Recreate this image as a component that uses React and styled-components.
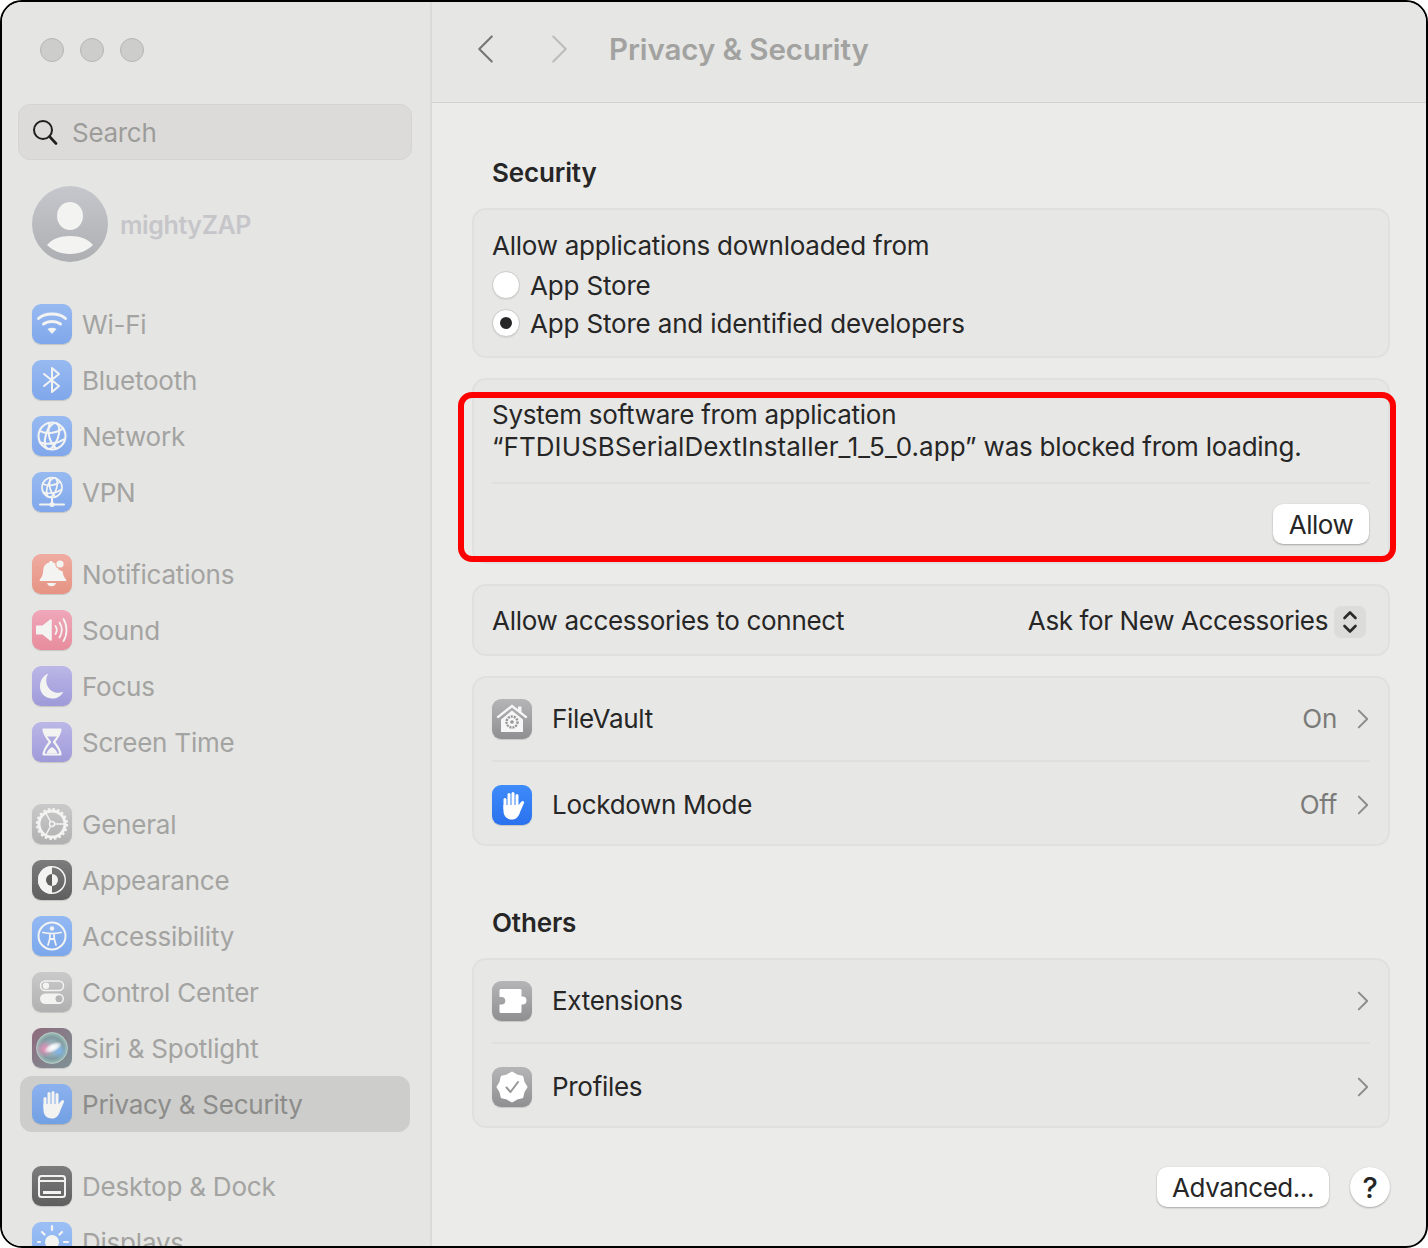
import React from "react";
import styled, { createGlobalStyle } from "styled-components";

const GlobalStyle = createGlobalStyle`
  html, body {
    margin: 0;
    background: #fff;
  }
  body {
    font-family: Inter, "Liberation Sans", sans-serif;
    -webkit-font-smoothing: antialiased;
  }
`;

const Window = styled.div`
  box-sizing: border-box;
  width: 1428px;
  height: 1248px;
  border: 2px solid #000;
  border-radius: 22px;
  overflow: hidden;
  display: grid;
  grid-template-columns: 430px 1fr;
  background: #ebebe9;
  color: #262626;
  letter-spacing: -0.25px;
`;

const Sidebar = styled.aside`
  height: 1244px;
  overflow: hidden;
  padding-top: 36px;
  box-sizing: border-box;
  background: #e5e5e3;
  border-right: 2px solid #dadad8;
`;

const Lights = styled.div`
  display: flex;
  gap: 16px;
  padding-left: 38px;
`;

const Light = styled.span`
  box-sizing: border-box;
  width: 24px;
  height: 24px;
  border-radius: 50%;
  background: #cdcdcb;
  border: 1px solid #b5b5b3;
`;

const SearchBox = styled.div`
  box-sizing: border-box;
  display: flex;
  align-items: center;
  gap: 14px;
  height: 56px;
  margin: 42px 18px 0 16px;
  padding-left: 13px;
  border: 1px solid #d4d4d2;
  border-radius: 12px;
  background: #dcdbd9;
  color: #9c9c9a;
  font-size: 26px;
  letter-spacing: -0.3px;
`;

const Profile = styled.div`
  display: flex;
  align-items: center;
  gap: 12px;
  height: 76px;
  margin-top: 26px;
  padding-left: 30px;
  color: #c6c6ca;
  font-size: 25px;
  font-weight: 600;
  letter-spacing: -0.4px;
`;

const ProfileName = styled.span`
  padding-top: 2px;
`;

const Nav = styled.nav`
  display: flex;
  flex-direction: column;
  gap: 26px;
  margin-top: 34px;
`;

const NavGroup = styled.div`
  display: flex;
  flex-direction: column;
`;

const NavRow = styled.div`
  flex: none;
  display: flex;
  align-items: center;
  gap: 10px;
  height: 56px;
  width: 390px;
  margin-left: 18px;
  padding-left: 12px;
  box-sizing: border-box;
  border-radius: 12px;
  font-size: 26px;
  letter-spacing: -0.22px;
  color: ${(p) => (p.$active ? "#8c8c8a" : "#a3a3a1")};
  background: ${(p) => (p.$active ? "#cdcdcb" : "transparent")};
`;

const Tile = styled.span`
  flex: none;
  width: 40px;
  height: 40px;
  border-radius: 9px;
  background: ${(p) => p.$bg};
  box-shadow: 0 1px 1px rgba(0, 0, 0, 0.14);
  overflow: hidden;
  svg {
    display: block;
    width: 40px;
    height: 40px;
  }
`;

const Main = styled.main`
  display: flex;
  flex-direction: column;
  height: 1244px;
  overflow: hidden;
`;

const Header = styled.header`
  flex: none;
  display: flex;
  align-items: center;
  box-sizing: border-box;
  height: 101px;
  padding: 0 0 6px 44px;
  background: #e6e6e4;
  border-bottom: 1px solid #d2d2d0;
`;

const HeaderButton = styled.span`
  display: flex;
  width: 28px;
  margin-right: 46px;
  &:last-of-type {
    margin-right: 31px;
  }
`;

const Title = styled.h1`
  margin: 0;
  font-size: 29.5px;
  line-height: 36px;
  font-weight: 600;
  letter-spacing: -0.08px;
  color: #a2a2a0;
`;

const Body = styled.div`
  display: flex;
  flex-direction: column;
  padding: 52px 36px 0 40px;
`;

const SectionTitle = styled.h2`
  margin: ${(p) => (p.$spaced ? "39px" : "0")} 0 17px 20px;
  font-size: 26px;
  line-height: 36px;
  font-weight: 600;
  letter-spacing: -0.15px;
  color: #262626;
`;

const Card = styled.section`
  position: relative;
  box-sizing: border-box;
  height: ${(p) => p.$height}px;
  margin-bottom: 20px;
  border: 2px solid #e0e0de;
  border-radius: 14px;
  background: #e7e7e5;
  font-size: 26px;
  padding: ${(p) => p.$pad || "0"};
`;

const Line = styled.div`
  line-height: ${(p) => p.$lh || 40}px;
  white-space: nowrap;
`;

const FileName = styled.span`
  letter-spacing: 0.06px;
`;

const RadioRow = styled.div`
  display: flex;
  align-items: center;
  gap: 10px;
  height: 38px;
  letter-spacing: -0.17px;
`;

const Radio = styled.span`
  box-sizing: border-box;
  display: flex;
  align-items: center;
  justify-content: center;
  width: 28px;
  height: 28px;
  border-radius: 50%;
  background: #fff;
  border: 1px solid #cbcbc9;
  box-shadow: 0 1px 1px rgba(0, 0, 0, 0.08);
  &::after {
    content: "";
    display: ${(p) => (p.$checked ? "block" : "none")};
    width: 12px;
    height: 12px;
    border-radius: 50%;
    background: #262626;
  }
`;

const Divider = styled.div`
  height: 2px;
  background: #dfdfdd;
  margin: ${(p) => p.$margin || "0 18px"};
`;

const ActionRow = styled.div`
  display: flex;
  justify-content: flex-end;
  margin-top: 20px;
  margin-right: 1px;
`;

const PushButton = styled.span`
  display: flex;
  align-items: center;
  justify-content: center;
  box-sizing: border-box;
  height: 40px;
  width: ${(p) => p.$width}px;
  border-radius: 10px;
  background: #fff;
  font-size: 26px;
  letter-spacing: -0.45px;
  box-shadow: 0 1px 2px rgba(0, 0, 0, 0.28), 0 0 1px rgba(0, 0, 0, 0.12);
`;

const Highlight = styled.div`
  position: absolute;
  top: 12px;
  left: -16px;
  width: 938px;
  height: 170px;
  box-sizing: border-box;
  border: 6px solid #ff0000;
  border-radius: 14px;
`;

const SelectRow = styled.div`
  display: flex;
  align-items: center;
  justify-content: space-between;
  height: 70px;
  padding: 0 22px 0 18px;
  letter-spacing: -0.29px;
`;

const SelectText = styled.span`
  padding-bottom: 2px;
`;

const SelectValue = styled.div`
  display: flex;
  align-items: center;
  gap: 6px;
  letter-spacing: -0.38px;
`;

const Stepper = styled.span`
  display: flex;
  width: 32px;
  height: 32px;
  margin-top: 2px;
  border-radius: 7px;
  background: #dcdcda;
`;

const ListRow = styled.div`
  box-sizing: border-box;
  display: flex;
  align-items: center;
  gap: 20px;
  height: 82px;
  margin: 0 18px;
  letter-spacing: -0.3px;
  &:last-child {
    padding-top: 4px;
  }
`;

const ListLabel = styled.span`
  flex: 1;
  padding-bottom: 2px;
`;

const ListValue = styled.span`
  color: #7b7b79;
  padding-bottom: 2px;
`;

const Disclosure = styled.span`
  display: flex;
  width: 13px;
`;

const Footer = styled.div`
  display: flex;
  justify-content: flex-end;
  align-items: center;
  gap: 21px;
  margin-top: 19px;
`;

const HelpButton = styled.span`
  display: flex;
  align-items: center;
  justify-content: center;
  width: 40px;
  height: 40px;
  border-radius: 50%;
  background: #fff;
  font-size: 29px;
  font-weight: 500;
  box-shadow: 0 1px 2px rgba(0, 0, 0, 0.28), 0 0 1px rgba(0, 0, 0, 0.12);
`;

const INK = "#f3f3f2";
const BLUE = "linear-gradient(#98baf1, #80a7eb)";
const GREY = "linear-gradient(#cacaca, #b0b0b0)";
const DARK = "linear-gradient(#7c7c7c, #5f5f5f)";
const PURPLE = "linear-gradient(#bbb7e7, #9e9ad9)";
const MID = "linear-gradient(#b5b5b7, #8f8f91)";

const Svg = ({ children, ...rest }) => (
  <svg viewBox="0 0 40 40" fill="none" {...rest}>
    {children}
  </svg>
);

const Hand = ({ color }) => (
  <Svg>
    <g stroke={color} strokeWidth="3" strokeLinecap="round">
      <path d="M13 14.500V24" />
      <path d="M17 9.500V21" />
      <path d="M21 8.500V21" />
      <path d="M25 10.500V22" />
    </g>
    <path
      fill={color}
      d="M11.500 20h15l3-3.500c1.200-1.300 3.200 0 2.400 1.700l-3.600 8.300C26.600 32 24 34.500 20 34.500c-5 0-8.500-3.500-8.500-8.500z"
    />
  </Svg>
);

const Wifi = () => (
  <Svg>
    <g stroke={INK} strokeWidth="3" strokeLinecap="round">
      <path d="M6.500 14.500C13 8.500 27 8.500 33.500 14.500" />
      <path d="M11.500 20C16 16.500 24 16.500 28.500 20" />
    </g>
    <path fill={INK} d="M15.500 25c2.800-1.800 6.200-1.800 9 0L20 30z" />
  </Svg>
);

const Bluetooth = () => (
  <Svg>
    <path
      stroke={INK}
      strokeWidth="2"
      strokeLinejoin="round"
      strokeLinecap="round"
      d="M12 14l15 12-7 6V8l7 6-15 12"
    />
  </Svg>
);

const Globe = ({ cx, cy, r, w }) => (
  <g stroke={INK} strokeWidth={w} transform={`translate(${cx} ${cy}) scale(${r / 13})`}>
    <circle r="13" />
    <ellipse rx="6" ry="13" transform="rotate(18)" />
    <path d="M-12-5C-5-1 6-3 11-8" />
    <path d="M-12 6C-5 9 6 7 12 3" />
    <path d="M-2-13C-5-5-3 6 4 12" />
  </g>
);

const Network = () => (
  <Svg>
    <Globe cx={20} cy={20} r={13.5} w={2} />
  </Svg>
);

const Vpn = () => (
  <Svg>
    <Globe cx={20} cy={15.5} r={10} w={2.2} />
    <path stroke={INK} strokeWidth="2" strokeLinecap="round" d="M8 32.500h24M20 26v6" />
    <circle cx="20" cy="32.500" r="2.500" fill={INK} />
  </Svg>
);

const Bell = () => (
  <Svg>
    <path
      fill={INK}
      d="M19 7c1 0 1.800.6 2 1.500 2 .4 3.600 1.300 4.800 2.700-.6 3 1.600 5.800 4.700 5.800.3 3 1.300 6 3.500 8.500.8.900.2 1.500-.8 1.500H9c-1.300 0-2-.8-1-1.800 2.800-3 3-6.500 3.300-10 .3-3.300 2.300-5.700 5.700-6.700.2-.9 1-1.500 2-1.500z"
    />
    <path fill={INK} d="M15 29h9c-.5 2-2.300 3.300-4.500 3.300S15.500 31 15 29z" />
    <circle cx="28" cy="10" r="4.800" fill="#eca99d" />
    <circle cx="28" cy="10" r="3.600" fill={INK} />
  </Svg>
);

const Sound = () => (
  <Svg>
    <path fill={INK} d="M5 15.500h5.500L18 9.500c.8-.6 1.800-.1 1.800 1v19c0 1.100-1 1.600-1.800 1l-7.500-6H5c-.6 0-1-.4-1-1v-7c0-.6.400-1 1-1z" />
    <g stroke={INK} strokeWidth="1.800" strokeLinecap="round">
      <path d="M23.500 16c1.600 2.500 1.600 5.500 0 8" />
      <path d="M27.500 12.500c2.800 4.500 2.800 10.500 0 15" />
      <path d="M31.500 9c4 6.500 4 15.500 0 22" />
    </g>
  </Svg>
);

const Moon = () => (
  <Svg>
    <path
      fill={INK}
      d="M16.500 7.500C13 12 13.500 19 18 23.500c3.800 3.600 9.200 4.200 13.500 2.200C29 30.300 24.500 33 19.500 32.500 12.500 32 7.500 26.500 8 19.500 8.300 14 11.800 9 16.500 7.500z"
    />
  </Svg>
);

const Hourglass = () => (
  <Svg>
    <path
      stroke={INK}
      strokeWidth="2.200"
      strokeLinejoin="round"
      d="M11.500 7.500h17c-.3 5-3.200 8.500-6.500 12.500 3.300 4 6.200 7.500 6.500 12.500h-17c.3-5 3.200-8.500 6.500-12.500-3.300-4-6.200-7.500-6.500-12.500z"
    />
    <path fill={INK} d="M12 7.500h16c-.4 3-1.400 5-2.600 7H14.600C13.400 12.500 12.400 10.500 12 7.500zM14.500 31.500c.6-3 3-5 5.500-6.500 2.500 1.500 4.900 3.500 5.500 6.500z" />
  </Svg>
);

const Gear = () => (
  <Svg>
    <circle cx="20" cy="20" r="13" stroke={INK} strokeWidth="3" />
    <circle cx="20" cy="20" r="14.800" stroke={INK} strokeWidth="2.600" strokeDasharray="2.500 2.150" />
    <circle cx="20" cy="20" r="2.500" stroke={INK} strokeWidth="1.500" />
    <path stroke={INK} strokeWidth="1.500" d="M13.500 8.500L18.800 18M33 20H22.500M13.500 31.500L18.800 22" />
  </Svg>
);

const Appearance = () => (
  <Svg>
    <circle cx="20" cy="20" r="13.250" stroke={INK} strokeWidth="1.500" />
    <path fill={INK} d="M20 6a14 14 0 000 28z" />
    <path fill="#5e5e5e" d="M20 14a6 6 0 000 12z" />
    <path fill={INK} d="M20 14a6 6 0 010 12z" />
  </Svg>
);

const Accessibility = () => (
  <Svg>
    <circle cx="20" cy="20" r="13.500" stroke={INK} strokeWidth="2" />
    <circle cx="20" cy="12.500" r="2.200" fill={INK} />
    <path
      stroke={INK}
      strokeWidth="1.800"
      strokeLinecap="round"
      strokeLinejoin="round"
      d="M11 16.500c6 1.500 12 1.500 18 0M18 17.500c.4 4-.4 7.500-2 11.500M22 17.500c-.4 4 .4 7.500 2 11.500M18 23h4"
    />
  </Svg>
);

const ControlCenter = () => (
  <Svg>
    <rect x="8.500" y="9" width="23" height="9.500" rx="4.750" stroke={INK} strokeWidth="1.500" />
    <circle cx="14" cy="13.750" r="3.200" fill={INK} />
    <rect x="8" y="21.500" width="24" height="10.500" rx="5.250" fill={INK} />
    <circle cx="27" cy="26.750" r="3.500" fill="#b5b5b5" />
  </Svg>
);

const Siri = () => (
  <Svg>
    <defs>
      <radialGradient id="siriDisc">
        <stop offset="0" stopColor="#b8c8d4" />
        <stop offset="0.7" stopColor="#7f9aa0" />
        <stop offset="1" stopColor="#9fc0b8" />
      </radialGradient>
      <radialGradient id="siriPink">
        <stop offset="0" stopColor="#e88fb8" />
        <stop offset="1" stopColor="#e88fb8" stopOpacity="0" />
      </radialGradient>
      <radialGradient id="siriBlue">
        <stop offset="0" stopColor="#7fb6ec" />
        <stop offset="1" stopColor="#7fb6ec" stopOpacity="0" />
      </radialGradient>
      <radialGradient id="siriCore">
        <stop offset="0" stopColor="#ffffff" />
        <stop offset="0.5" stopColor="#f6f6fa" stopOpacity="0.85" />
        <stop offset="1" stopColor="#ffffff" stopOpacity="0" />
      </radialGradient>
    </defs>
    <circle cx="20" cy="20" r="15.500" fill="url(#siriDisc)" />
    <circle cx="20" cy="20" r="15.500" stroke="#c3d6d2" strokeWidth="1" opacity="0.7" />
    <circle cx="12.500" cy="21" r="9" fill="url(#siriPink)" />
    <circle cx="27" cy="23" r="8" fill="url(#siriBlue)" />
    <ellipse cx="21" cy="19.500" rx="10" ry="4.500" fill="url(#siriCore)" transform="rotate(-25 21 19.500)" />
  </Svg>
);

const Desktop = () => (
  <Svg>
    <rect x="7" y="10" width="26" height="21" rx="2.500" stroke={INK} strokeWidth="2" />
    <path stroke={INK} strokeWidth="2" d="M7 15h26" />
    <rect x="11" y="25" width="18" height="3" fill={INK} />
  </Svg>
);

const Sun = () => (
  <Svg>
    <circle cx="20" cy="20" r="7" fill={INK} />
    <path
      stroke={INK}
      strokeWidth="2.200"
      strokeLinecap="round"
      d="M20 4v4M20 32v4M6 20h2M32 20h4M10 10l2.500 2.500M30 10l-2.500 2.500M10 30l2.500-2.500M30 30l-2.500-2.500"
    />
  </Svg>
);

const Vault = () => (
  <Svg>
    <path fill="#f6f6f6" d="M20 5.500l6 4.800V7.500h3.500v5.600l6 4.700-1.500 1.700L20 8.500 6 19.500l-1.500-1.700z" />
    <path fill="#f6f6f6" d="M9 20.500L20 11.500l11 9V33H9z" />
    <circle cx="20" cy="23" r="5.500" stroke="#97979a" strokeWidth="2.400" strokeDasharray="2 1" />
    <circle cx="20" cy="23" r="1.800" fill="#97979a" />
  </Svg>
);

const Puzzle = () => (
  <Svg>
    <path
      fill="#fff"
      d="M9 8h19c1 0 1.500.6 1.500 1.500V15.500h1a4 4 0 010 8h-1V30.500c0 .9-.5 1.500-1.500 1.500H9c-1 0-1.500-.6-1.500-1.500V23.500h2a3.800 3.800 0 000-7.600h-2V9.500C7.500 8.600 8 8 9 8z"
    />
  </Svg>
);

const badgePoints = Array.from({ length: 16 }, (_, i) => {
  const a = (i / 16) * Math.PI * 2;
  const r = i % 2 ? 12.5 : 14.5;
  return `${(20 + r * Math.sin(a)).toFixed(2)},${(20 - r * Math.cos(a)).toFixed(2)}`;
}).join(" ");

const Badge = () => (
  <Svg>
    <polygon points={badgePoints} fill="#fff" stroke="#fff" strokeWidth="2" strokeLinejoin="round" />
    <path stroke="#97979a" strokeWidth="2" strokeLinecap="round" strokeLinejoin="round" d="M14.500 20.500l4 4.500 7.500-10" />
  </Svg>
);

const SearchGlyph = () => (
  <svg width="26" height="26" viewBox="0 0 26 26" fill="none" stroke="#1f1f1f" strokeWidth="2" strokeLinecap="round">
    <circle cx="11" cy="11" r="9" />
    <path d="M17.500 17.500L24 24.500" strokeWidth="2.600" />
  </svg>
);

const Avatar = () => (
  <svg width="76" height="76" viewBox="0 0 76 76">
    <defs>
      <linearGradient id="avatarFill" x1="0" y1="0" x2="0" y2="1">
        <stop offset="0" stopColor="#c6c7cc" />
        <stop offset="1" stopColor="#aeafb3" />
      </linearGradient>
    </defs>
    <circle cx="38" cy="38" r="38" fill="url(#avatarFill)" />
    <ellipse cx="38" cy="30" rx="13" ry="14" fill="#f3f3f2" />
    <path d="M15 59c5-6 13-9 23-9s18 3 23 9c-5 5-13 9-23 9s-18-4-23-9z" fill="#f3f3f2" />
  </svg>
);

const Chevron = ({ dir, color, width, height, strokeWidth }) => (
  <svg width={width} height={height} viewBox="0 0 14 24" fill="none" stroke={color} strokeWidth={strokeWidth} strokeLinecap="round" strokeLinejoin="round">
    <path d={dir === "left" ? "M12 2L2 12l10 10" : "M2 2l10 10L2 22"} />
  </svg>
);

const StepperGlyph = () => (
  <svg width="32" height="32" viewBox="0 0 32 32" fill="none" stroke="#2a2a2a" strokeWidth="2.600" strokeLinecap="round" strokeLinejoin="round">
    <path d="M10.500 12L16 6.500 21.500 12M10.500 20l5.500 5.500 5.500-5.500" />
  </svg>
);

const navGroups = [
  [
    { label: "Wi-Fi", bg: BLUE, icon: <Wifi /> },
    { label: "Bluetooth", bg: BLUE, icon: <Bluetooth /> },
    { label: "Network", bg: BLUE, icon: <Network /> },
    { label: "VPN", bg: BLUE, icon: <Vpn /> },
  ],
  [
    { label: "Notifications", bg: "linear-gradient(#efaca1, #e69383)", icon: <Bell /> },
    { label: "Sound", bg: "linear-gradient(#efa8ba, #e78c9c)", icon: <Sound /> },
    { label: "Focus", bg: PURPLE, icon: <Moon /> },
    { label: "Screen Time", bg: PURPLE, icon: <Hourglass /> },
  ],
  [
    { label: "General", bg: GREY, icon: <Gear /> },
    { label: "Appearance", bg: DARK, icon: <Appearance /> },
    { label: "Accessibility", bg: "linear-gradient(#93b9f3, #7ba7ec)", icon: <Accessibility /> },
    { label: "Control Center", bg: GREY, icon: <ControlCenter /> },
    { label: "Siri & Spotlight", bg: "linear-gradient(135deg, #8f6a7c, #7d9296)", icon: <Siri /> },
    { label: "Privacy & Security", bg: "linear-gradient(#8db2ee, #72a0e4)", icon: <Hand color={INK} />, active: true },
  ],
  [
    { label: "Desktop & Dock", bg: DARK, icon: <Desktop /> },
    { label: "Displays", bg: "linear-gradient(#9cc0f5, #85adee)", icon: <Sun /> },
  ],
];

const ListItem = ({ bg, icon, label, value }) => (
  <ListRow>
    <Tile $bg={bg}>{icon}</Tile>
    <ListLabel>{label}</ListLabel>
    {value ? <ListValue>{value}</ListValue> : null}
    <Disclosure>
      <Chevron dir="right" color="#8d8d8b" width={12} height={20} strokeWidth={2.4} />
    </Disclosure>
  </ListRow>
);

const App = () => {
  return (
    <Window>
      <GlobalStyle />
      <Sidebar>
        <Lights>
          <Light />
          <Light />
          <Light />
        </Lights>
        <SearchBox>
          <SearchGlyph />
          Search
        </SearchBox>
        <Profile>
          <Avatar />
          <ProfileName>mightyZAP</ProfileName>
        </Profile>
        <Nav>
          {navGroups.map((group) => (
            <NavGroup key={group[0].label}>
              {group.map((item) => (
                <NavRow key={item.label} $active={item.active}>
                  <Tile $bg={item.bg}>{item.icon}</Tile>
                  {item.label}
                </NavRow>
              ))}
            </NavGroup>
          ))}
        </Nav>
      </Sidebar>
      <Main>
        <Header>
          <HeaderButton>
            <Chevron dir="left" color="#777775" width={19} height={30} strokeWidth={1.7} />
          </HeaderButton>
          <HeaderButton>
            <Chevron dir="right" color="#bdbdbb" width={19} height={30} strokeWidth={1.7} />
          </HeaderButton>
          <Title>Privacy &amp; Security</Title>
        </Header>
        <Body>
          <SectionTitle>Security</SectionTitle>
          <Card $height={150} $pad="16px 18px 0">
            <Line>Allow applications downloaded from</Line>
            <RadioRow>
              <Radio />
              App Store
            </RadioRow>
            <RadioRow>
              <Radio $checked />
              App Store and identified developers
            </RadioRow>
          </Card>
          <Card $height={186} $pad="19px 18px 0">
            <Line $lh={32}>System software from application</Line>
            <Line $lh={32}>
              <FileName>“FTDIUSBSerialDextInstaller_1_5_0.app”</FileName> was blocked from loading.
            </Line>
            <Divider $margin="19px 0 0" />
            <ActionRow>
              <PushButton $width={96}>Allow</PushButton>
            </ActionRow>
            <Highlight />
          </Card>
          <Card $height={72}>
            <SelectRow>
              <SelectText>Allow accessories to connect</SelectText>
              <SelectValue>
                <SelectText>Ask for New Accessories</SelectText>
                <Stepper>
                  <StepperGlyph />
                </Stepper>
              </SelectValue>
            </SelectRow>
          </Card>
          <Card $height={170}>
            <ListItem bg={MID} icon={<Vault />} label="FileVault" value="On" />
            <Divider />
            <ListItem bg="linear-gradient(#3e8bfa, #2a72ee)" icon={<Hand color="#fff" />} label="Lockdown Mode" value="Off" />
          </Card>
          <SectionTitle $spaced>Others</SectionTitle>
          <Card $height={170}>
            <ListItem bg={MID} icon={<Puzzle />} label="Extensions" />
            <Divider />
            <ListItem bg={MID} icon={<Badge />} label="Profiles" />
          </Card>
          <Footer>
            <PushButton $width={172}>Advanced...</PushButton>
            <HelpButton>?</HelpButton>
          </Footer>
        </Body>
      </Main>
    </Window>
  );
};

export default App;
